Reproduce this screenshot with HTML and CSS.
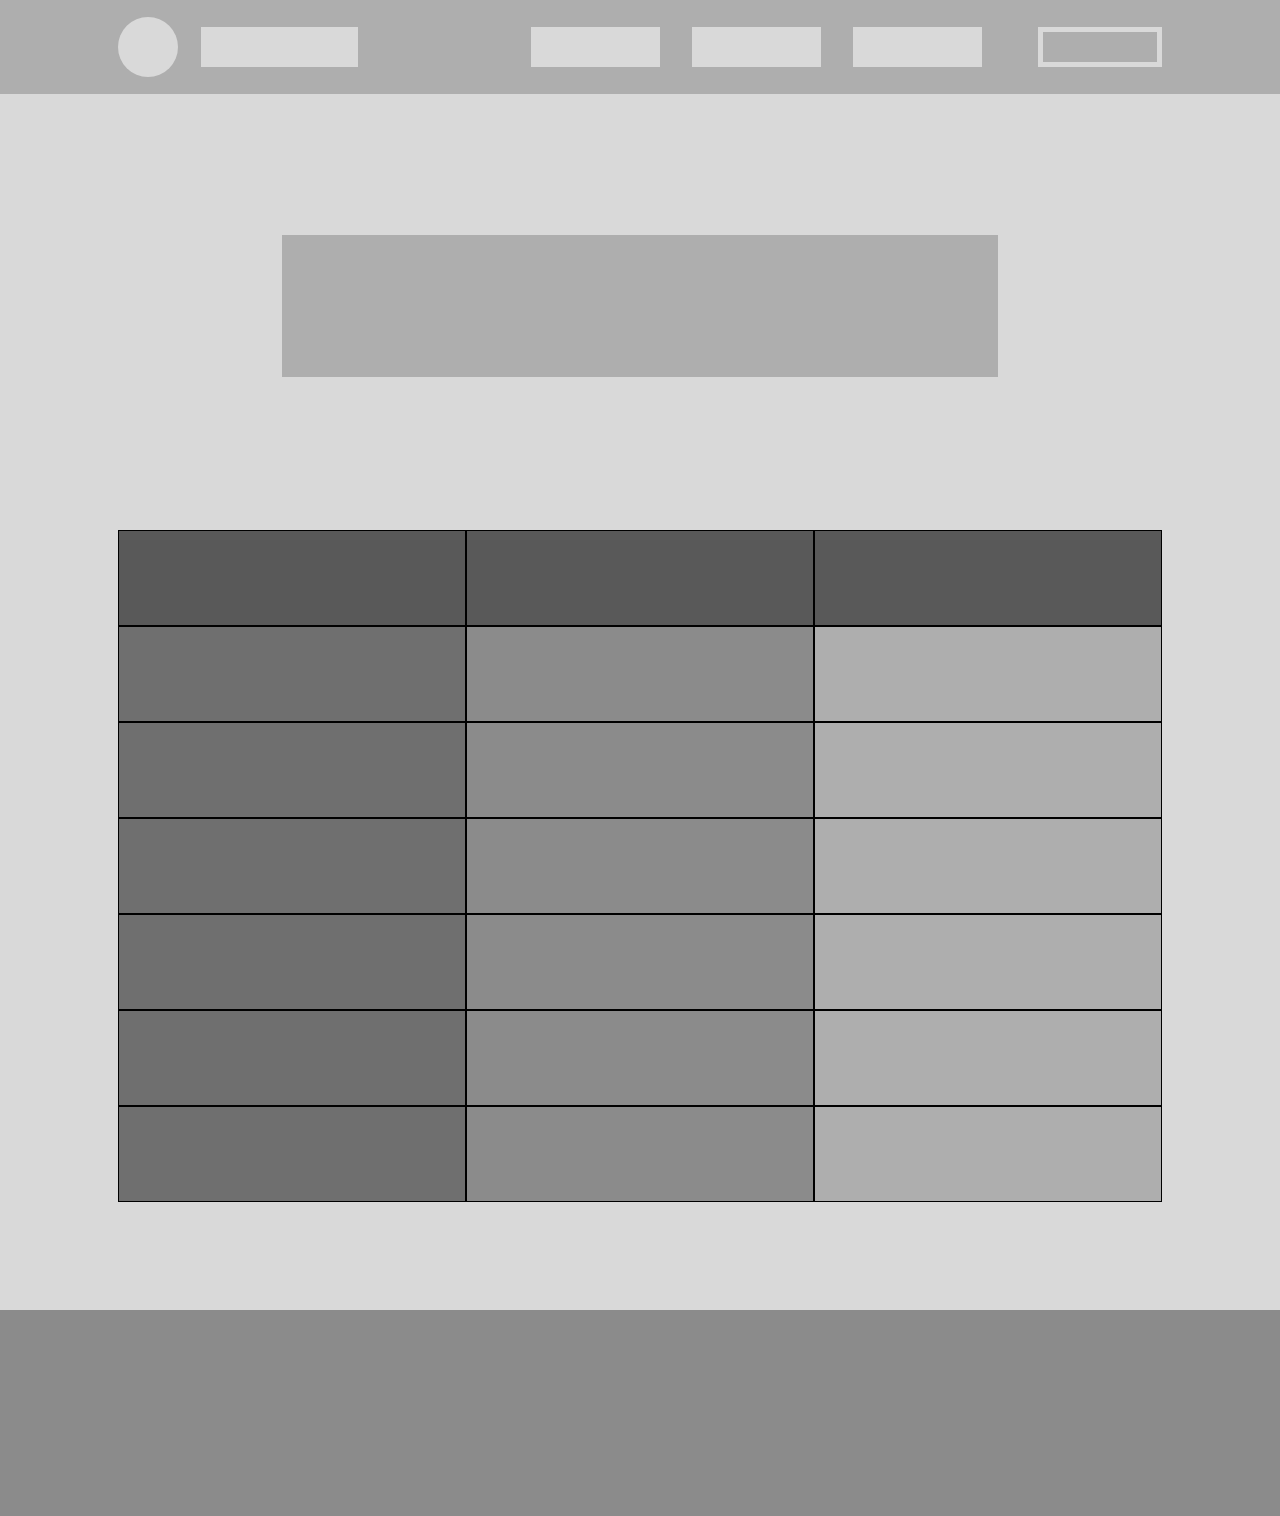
FILE: index.html
```html
<!DOCTYPE html>
<html lang="en">
<head>
  <meta charset="utf-8">
  <meta name="viewport" content="width=device-width, initial-scale=1">
  <title>Wireframe</title>
  <link rel="stylesheet" href="styles.css">
</head>
<body>
  <header class="site-header">
    <div class="container header-row">
      <a class="brand" href="#" aria-label="Home">
        <span class="brand-logo"></span>
        <span class="brand-name"></span>
      </a>
      <div class="header-actions">
        <nav class="site-nav" aria-label="Main">
          <a class="nav-link" href="#" aria-label="First section"></a>
          <a class="nav-link" href="#" aria-label="Second section"></a>
          <a class="nav-link" href="#" aria-label="Third section"></a>
        </nav>
        <button class="outline-button" type="button" aria-label="Action"></button>
      </div>
    </div>
  </header>

  <main class="container content">
    <section class="banner" aria-label="Title"></section>
    <table class="data-table" aria-label="Data">
      <thead>
        <tr><th scope="col"></th><th scope="col"></th><th scope="col"></th></tr>
      </thead>
      <tbody>
        <tr><td></td><td></td><td></td></tr>
        <tr><td></td><td></td><td></td></tr>
        <tr><td></td><td></td><td></td></tr>
        <tr><td></td><td></td><td></td></tr>
        <tr><td></td><td></td><td></td></tr>
        <tr><td></td><td></td><td></td></tr>
      </tbody>
    </table>
  </main>

  <footer class="site-footer"></footer>
</body>
</html>
```
FILE: styles.css
```css
:root {
  --light: #d9d9d9;
  --silver: #aeaeae;
  --gray: #8b8b8b;
  --dim: #6f6f6f;
  --dark: #595959;
}

* {
  box-sizing: border-box;
}

body {
  display: flex;
  flex-direction: column;
  min-height: 100vh;
  margin: 0;
  background: var(--light);
  font-family: "Liberation Sans", Arial, sans-serif;
}

.container {
  width: calc(100% - 48px);
  max-width: 1044px;
  margin: 0 auto;
}

.site-header {
  padding: 17px 0;
  background: var(--silver);
}

.header-row {
  display: flex;
  align-items: center;
  justify-content: space-between;
  flex-wrap: wrap;
  gap: 24px;
}

.brand {
  display: flex;
  align-items: center;
  gap: 23px;
}

.brand-logo {
  width: 60px;
  height: 60px;
  border-radius: 50%;
  background: var(--light);
}

.brand-name {
  width: 157px;
  height: 40px;
  background: var(--light);
}

.header-actions {
  display: flex;
  align-items: center;
  flex-wrap: wrap;
  gap: 56px;
}

.site-nav {
  display: flex;
  gap: 32px;
}

.nav-link {
  width: 129px;
  height: 40px;
  background: var(--light);
}

.outline-button {
  width: 124px;
  height: 40px;
  padding: 0;
  border: 5px solid var(--light);
  background: transparent;
}

.content {
  padding: 141px 0 108px;
}

.banner {
  max-width: 716px;
  height: 142px;
  margin: 0 auto 153px;
  background: var(--silver);
}

.data-table {
  width: 100%;
  table-layout: fixed;
  border-spacing: 0;
}

.data-table th,
.data-table td {
  height: 96px;
  padding: 0;
  border: 1px solid #000;
}

.data-table th {
  background: var(--dark);
}

.data-table td:nth-child(1) {
  background: var(--dim);
}

.data-table td:nth-child(2) {
  background: var(--gray);
}

.data-table td:nth-child(3) {
  background: var(--silver);
}

.site-footer {
  flex: 1 0 auto;
  min-height: 206px;
  background: var(--gray);
}
```
